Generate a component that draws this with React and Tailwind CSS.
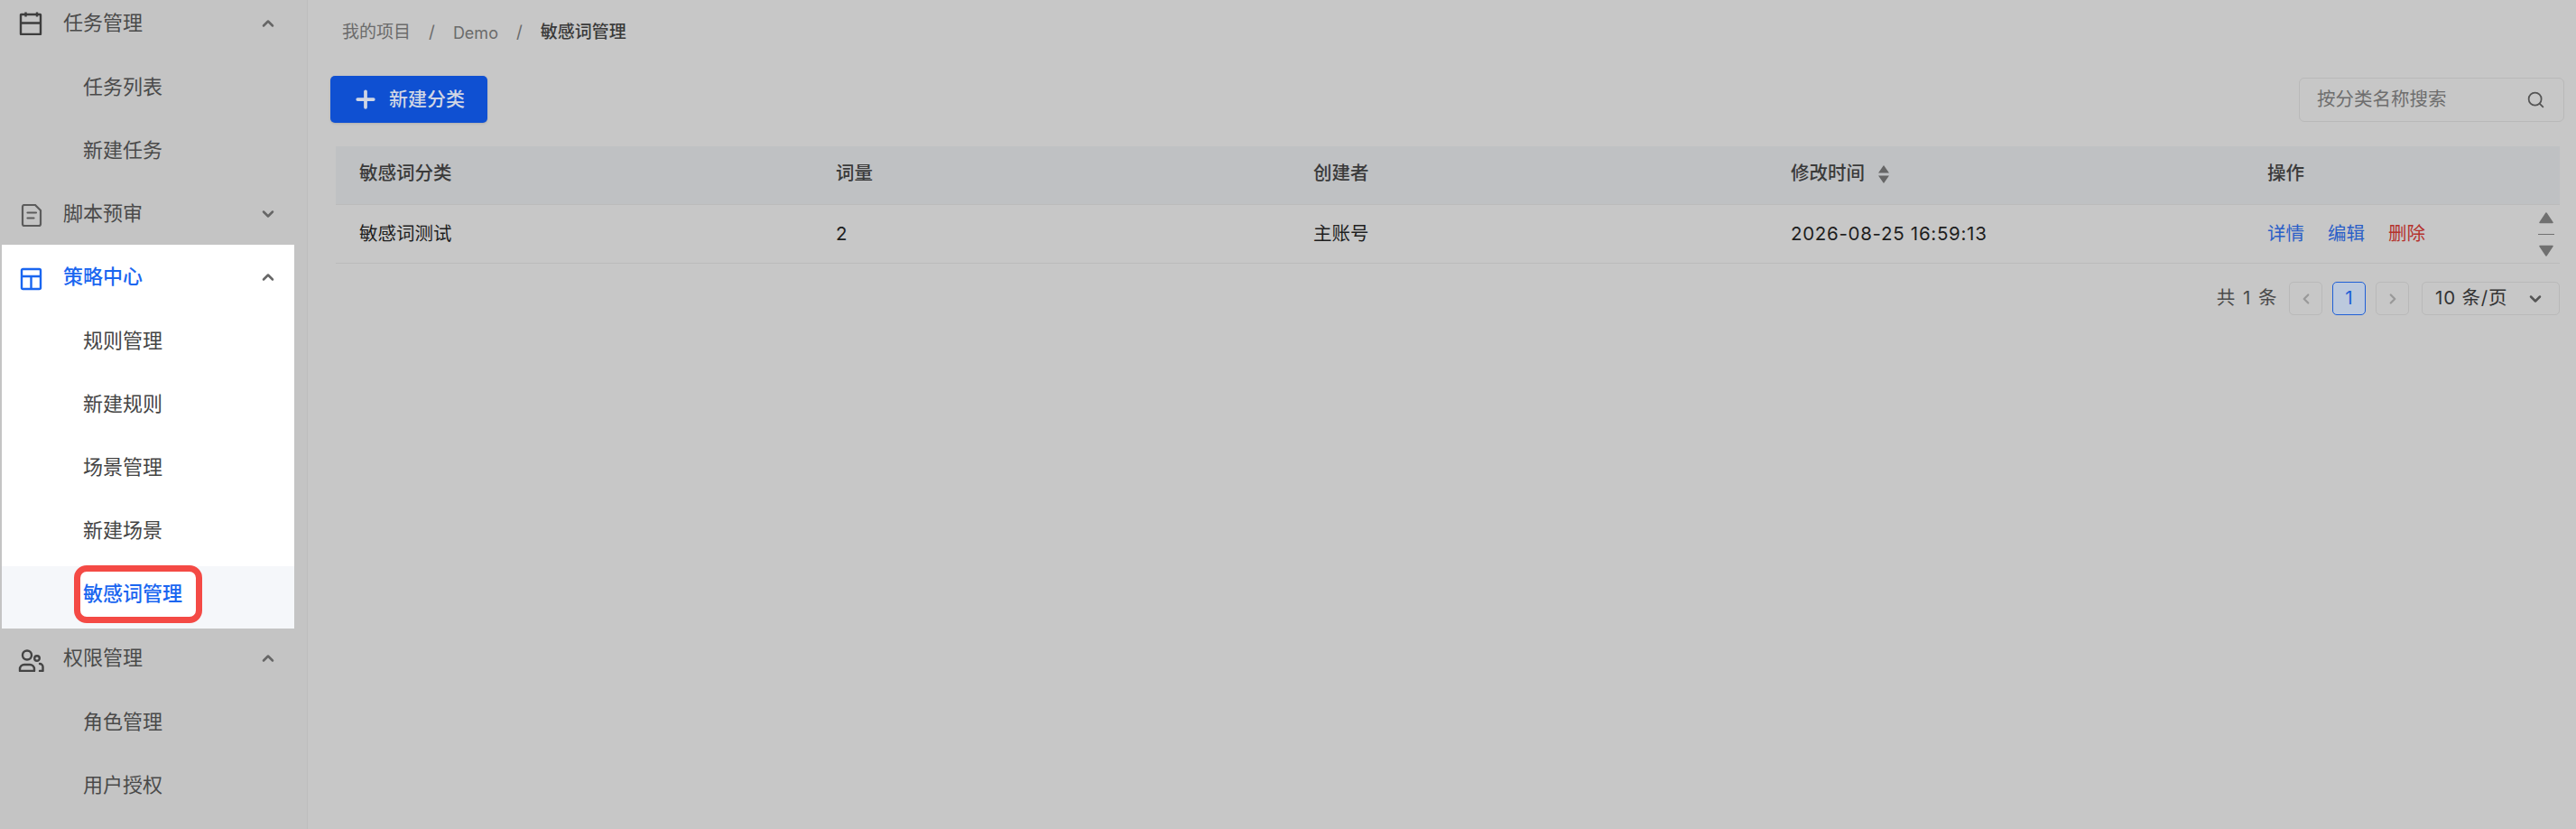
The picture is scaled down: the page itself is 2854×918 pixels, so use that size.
import React from "react";
import { ChevronUp, ChevronDown, ChevronLeft, ChevronRight, Plus, Search } from "lucide-react";

const FONT = "font-['Inter','Noto_Sans_CJK_SC',sans-serif]";

function CalendarIcon() {
  return (
    <svg width="26" height="26" viewBox="0 0 26 26" fill="none" stroke="#3d3d3d" strokeWidth="2.4">
      <rect x="2" y="3" width="22" height="22" rx="0.5" />
      <path d="M2 12.5h22M7.5 0.5v5M20 0.5v5" />
    </svg>
  );
}

function DocIcon() {
  return (
    <svg className="mt-[5px]" width="26" height="26" viewBox="0 0 26 26" fill="none" stroke="#5c5c5c" strokeWidth="2.2" strokeLinecap="round" strokeLinejoin="round">
      <path d="M6 1h12l6 6v15a2 2 0 0 1-2 2H6a2 2 0 0 1-2-2V3a2 2 0 0 1 2-2z" />
      <path d="M9.5 9.5h9.5M9.5 15.5h7" />
    </svg>
  );
}

function LayoutIcon() {
  return (
    <svg className="mt-[4px]" width="26" height="26" viewBox="0 0 26 26" fill="none" stroke="currentColor" strokeWidth="2.4">
      <rect x="3" y="2" width="21" height="22" rx="1.5" />
      <path d="M3 10h21M13.5 10v14" />
    </svg>
  );
}

function UsersIcon() {
  return (
    <svg className="mt-[5px]" width="30" height="26" viewBox="0 0 30 26" fill="none" stroke="#444444" strokeWidth="2.4" strokeLinecap="round" strokeLinejoin="round">
      <circle cx="11" cy="7.5" r="5" />
      <path d="M3 25v-2a5 5 0 0 1 5-5h6a5 5 0 0 1 5 5v2z" />
      <circle cx="22" cy="11" r="2.8" />
      <path d="M25 17a3.5 3.5 0 0 1 3.5 3.5V25h-3.5" />
    </svg>
  );
}

function GroupRow({ icon, label, open, active }) {
  const Chevron = open ? ChevronUp : ChevronDown;
  return (
    <div className={`flex items-center w-[326px] h-[71px] text-[22px] ${active ? "text-[#1a66f0] font-medium" : "text-[#4a4a4a]"}`}>
      <div className="flex w-[70px] justify-center pr-[2px]">{icon}</div>
      <span className="flex-1">{label}</span>
      <Chevron className="mr-[19px] text-[#666666]" size={20} strokeWidth={3} />
    </div>
  );
}

function SubRow({ label, color = "text-[#4a4a4a]" }) {
  return <div className={`flex items-center h-[70px] pl-[92px] text-[22px] ${color}`}>{label}</div>;
}

function Sidebar() {
  return (
    <aside className="w-[341px] shrink-0 bg-[#c4c4c4] border-r border-[#bebebe] overflow-hidden">
      <div className="-mt-[10px]">
        <GroupRow icon={<CalendarIcon />} label="任务管理" open />
        <SubRow label="任务列表" />
        <SubRow label="新建任务" />
        <GroupRow icon={<DocIcon />} label="脚本预审" />
        <div className="ml-[2px] w-[324px] bg-white -mt-[1px]">
          <div className="-ml-[2px]">
            <GroupRow icon={<LayoutIcon />} label="策略中心" open active />
          </div>
          <div className="-ml-[2px]">
            <SubRow label="规则管理" color="text-[#444444]" />
            <SubRow label="新建规则" color="text-[#444444]" />
            <SubRow label="场景管理" color="text-[#444444]" />
            <SubRow label="新建场景" color="text-[#444444]" />
          </div>
          {/* selected item with the red annotation box on top */}
          <div className="relative mt-[5px] h-[69px] bg-[#f5f7fa]">
            <div className="absolute left-[80px] -top-[1px] w-[142px] h-[64px] bg-white border-[7px] border-[#f44a45] rounded-[14px]" />
            <span className="absolute left-[90px] top-0 h-[60px] flex items-center text-[22px] font-medium text-[#1a66f0] whitespace-nowrap">
              敏感词管理
            </span>
          </div>
        </div>
        <div className="-mt-[3px]">
          <GroupRow icon={<UsersIcon />} label="权限管理" open />
        </div>
        <SubRow label="角色管理" />
        <SubRow label="用户授权" />
      </div>
    </aside>
  );
}

const COLS = "grid grid-cols-[528px_529px_529px_528px_1fr]";

function Table() {
  return (
    <div className="relative ml-[31px] mr-[18px] mt-[26px]">
      <div className={`${COLS} h-[64px] pb-[3px] items-center bg-[#bfc1c3] text-[20.5px] font-medium text-[#3a3a3a]`}>
        <div className="pl-[26px]">敏感词分类</div>
        <div className="pl-[26px]">词量</div>
        <div className="pl-[26px]">创建者</div>
        <div className="pl-[26px] flex items-center gap-[14px]">
          修改时间
          <svg width="14" height="22" viewBox="0 0 14 22" fill="#666666">
            <path d="M7 1l6 8.5H1zM7 21l-6-8.5h12z" />
          </svg>
        </div>
        <div className="pl-[26px]">操作</div>
      </div>
      <div className={`${COLS} h-[66px] items-center border-t border-b border-[#bbbbbb] text-[20.5px] text-[#1e1e1e]`}>
        <div className="pl-[26px]">敏感词测试</div>
        <div className="pl-[26px]">2</div>
        <div className="pl-[26px]">主账号</div>
        <div className="pl-[26px] whitespace-nowrap tracking-[0.7px]">2026-08-25 16:59:13</div>
        <div className="pl-[26px] flex gap-[26px]">
          <span className="text-[#2b5fc7]">详情</span>
          <span className="text-[#2b5fc7]">编辑</span>
          <span className="text-[#b5322c]">删除</span>
        </div>
      </div>
      {/* floating scroll widget over the row's right end */}
      <div className="absolute right-[6px] top-[73px] w-[18px] flex flex-col items-center">
        <svg width="18" height="49" viewBox="0 0 18 49" fill="#707070" stroke="#707070" strokeWidth="1.5" strokeLinejoin="round">
          <path d="M9 1l7 10.5H2zM9 48l7-10.5H2z" />
          <path d="M0 24.5h18" strokeWidth="1" />
        </svg>
      </div>
    </div>
  );
}

function Pager() {
  return (
    <div className="flex items-center justify-end mr-[18px] mt-[20px] text-[20.5px] text-[#4a4a4a]">
      <span className="tracking-[1.5px] whitespace-pre">共 1 条</span>
      <div className="ml-[12px] w-[37px] h-[37px] flex items-center justify-center border border-[#b9b9b9] rounded-[5px] text-[#999999]">
        <ChevronLeft size={18} strokeWidth={3} />
      </div>
      <div className="ml-[11px] w-[37px] h-[37px] flex items-center justify-center border border-[#1f5fd6] rounded-[5px] bg-[#bcc9dd] text-[#1f5fd6]">
        1
      </div>
      <div className="ml-[11px] w-[37px] h-[37px] flex items-center justify-center border border-[#b9b9b9] rounded-[5px] text-[#999999]">
        <ChevronRight size={18} strokeWidth={3} />
      </div>
      <div className="ml-[14px] w-[153px] h-[37px] flex items-center justify-between pl-[14px] pr-[16px] border border-[#b9b9b9] rounded-[5px] text-[#333333]">
        <span className="whitespace-pre tracking-[0.8px]">10 条/页</span>
        <ChevronDown size={20} strokeWidth={3} className="text-[#555555]" />
      </div>
    </div>
  );
}

export default function App() {
  return (
    <div className={`flex h-[918px] overflow-hidden bg-[#c7c7c7] ${FONT}`}>
      <Sidebar />
      <main className="flex-1 min-w-0">
        <nav className="flex items-center h-[28px] mt-[22px] ml-[38px] text-[19px] text-[#6b6b6b]">
          <span>我的项目</span>
          <span className="mx-[20px]">/</span>
          <span className="text-[18px]">Demo</span>
          <span className="mx-[20px]">/</span>
          <span className="font-medium text-[#3a3a3a]">敏感词管理</span>
        </nav>
        <div className="flex items-center justify-between mt-[34px] ml-[25px] mr-[13px]">
          <button className="flex items-center gap-[11px] w-[174px] h-[52px] pl-[24px] bg-[#0f50d2] rounded-[5px] shadow-sm text-[21px] font-medium text-[#d0d6e4]">
            <Plus size={30} strokeWidth={3} />
            新建分类
          </button>
          <div className="flex items-center justify-between w-[294px] h-[49px] pl-[19px] pr-[20px] border border-[#b9b9b9] rounded-[6px] text-[20.5px] text-[#6e6e6e]">
            <span>按分类名称搜索</span>
            <Search size={21} strokeWidth={2} className="text-[#555555]" />
          </div>
        </div>
        <Table />
        <Pager />
      </main>
    </div>
  );
}
